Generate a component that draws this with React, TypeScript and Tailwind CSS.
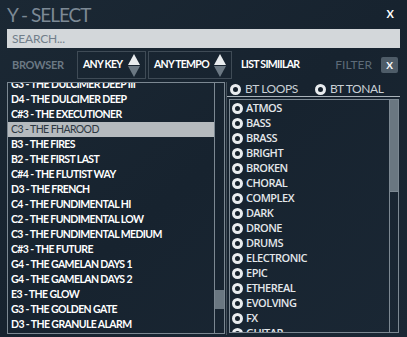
import React from 'react';

const presets = [
  'G3 - THE DULCIMER DEEP III',
  'D4 - THE DULCIMER DEEP',
  'C#3 - THE EXECUTIONER',
  'C3 - THE FHAROOD',
  'B3 - THE FIRES',
  'B2 - THE FIRST LAST',
  'C#4 - THE FLUTIST WAY',
  'D3 - THE FRENCH',
  'C4 - THE FUNDIMENTAL HI',
  'C2 - THE FUNDIMENTAL LOW',
  'C3 - THE FUNDIMENTAL MEDIUM',
  'C#3 - THE FUTURE',
  'G4 - THE GAMELAN DAYS 1',
  'G4 - THE GAMELAN DAYS 2',
  'E3 - THE GLOW',
  'G3 - THE GOLDEN GATE',
  'D3 - THE GRANULE ALARM',
  'G2 - THE GREAT',
];

const tags = [
  'ATMOS', 'BASS', 'BRASS', 'BRIGHT', 'BROKEN', 'CHORAL', 'COMPLEX', 'DARK',
  'DRONE', 'DRUMS', 'ELECTRONIC', 'EPIC', 'ETHEREAL', 'EVOLVING', 'FX', 'GUITAR', 'HITS',
];

const SELECTED = 'C3 - THE FHAROOD';

function Radio() {
  return <span className="block w-[11px] h-[11px] rounded-full border-[3px] border-[#e9ecef] bg-[#16212c] shrink-0" />;
}

function Spinner() {
  return (
    <svg width="12" height="23" viewBox="0 0 12 23" className="shrink-0">
      <polygon points="6,0 12,11 0,11" fill="#e9ecee" />
      <polygon points="0,12 12,12 6,23" fill="#6b7883" />
    </svg>
  );
}

function Dropdown({ label, width }: { label: string; width: string }) {
  return (
    <div className={`${width} h-[28px] border border-[#3f4b56] flex items-center justify-between pl-[5px] pr-[5px]`}>
      <span className="text-[10.5px] font-bold text-white tracking-[-0.7px]">{label}</span>
      <Spinner />
    </div>
  );
}

export default function App() {
  return (
    <div
      className="w-[407px] h-[337px] overflow-hidden bg-gradient-to-br from-[#1b2834] via-[#17232f] to-[#1a2734] flex flex-col px-[7px] select-none"
      style={{ fontFamily: 'Lato, "Open Sans", sans-serif' }}
    >
      {/* Title bar */}
      <div className="h-[29px] flex items-center justify-between">
        <span className="text-[19px] text-[#7c8995] tracking-[-1px] leading-none">Y - SELECT</span>
        <span className="text-[11px] font-bold text-white mr-[6px]">X</span>
      </div>

      {/* Search */}
      <div className="h-[19px] bg-[#d3d7da] flex items-center pl-[5px]">
        <span className="text-[12px] text-[#717e8a] tracking-[-0.2px]">SEARCH...</span>
      </div>

      {/* Controls */}
      <div className="h-[28px] mt-[3px] flex items-center">
        <span className="w-[70px] pl-[5px] text-[11px] font-bold text-[#6b7884] tracking-[-0.3px]">BROWSER</span>
        <Dropdown label="ANY KEY" width="w-[69px]" />
        <div className="w-[2px]" />
        <Dropdown label="ANY TEMPO" width="w-[84px]" />
        <span className="ml-[9px] text-[10.5px] font-bold text-white tracking-[-0.7px]">LIST SIMIILAR</span>
        <span className="ml-auto text-[12px] text-[#5d6b78]">FILTER</span>
        <span className="ml-[9px] mr-[2px] w-[17px] h-[16px] rounded-[2px] bg-[#4e5c68] flex items-center justify-center text-[10px] font-bold text-white">X</span>
      </div>

      {/* Main */}
      <div className="flex mt-[3px] h-[253px]">
        {/* preset list */}
        <div className="w-[218px] h-[252px] border border-[#7c8892] flex">
          <div className="flex-1 overflow-hidden">
            <div className="-mt-[6px]">
              {presets.map((p, i) => (
                <div
                  key={i}
                  className={`h-[15px] flex items-center pl-[3px] text-[10.5px] tracking-[-0.6px] ${
                    p === SELECTED ? 'bg-[#b5babe] text-[#2d3842]' : 'font-bold text-white'
                  }`}
                >
                  {p}
                </div>
              ))}
            </div>
          </div>
          <div className="w-[10px] border-l border-[#7c8892] flex flex-col">
            <div className="h-[207px]" />
            <div className="h-[19px] bg-[#6a7781]" />
          </div>
        </div>

        {/* tags */}
        <div className="flex-1 border-l border-[#46525c] ml-[1px] flex flex-col">
          <div className="h-[15px] flex items-center pl-[3px] border-b border-[#aab3ba]">
            <Radio />
            <span className="ml-[4px] text-[12px] text-[#c9d0d6] tracking-[-0.4px]">BT LOOPS</span>
            <div className="ml-[17px]"><Radio /></div>
            <span className="ml-[4px] text-[12px] text-[#c9d0d6] tracking-[-0.4px]">BT TONAL</span>
          </div>
          <div className="mt-[2px] ml-[2px] mr-[1px] h-[234px] border border-[#7c8892] flex">
            <div className="flex-1 overflow-hidden pt-[1px]">
              {tags.map((t) => (
                <div key={t} className="h-[15px] flex items-center pl-[2px]">
                  <Radio />
                  <span
                    className="ml-[3px] text-[11px] font-semibold text-[#e3e7ea] tracking-[-0.5px]"
                    style={{ fontFamily: '"Open Sans", sans-serif' }}
                  >
                    {t}
                  </span>
                </div>
              ))}
            </div>
            <div className="w-[9px] border-l border-[#7c8892] flex flex-col">
              <div className="h-[91px] bg-[#6a7781]" />
              <div className="flex-1 border-t border-[#7c8892]" />
            </div>
          </div>
        </div>
      </div>
    </div>
  );
}
